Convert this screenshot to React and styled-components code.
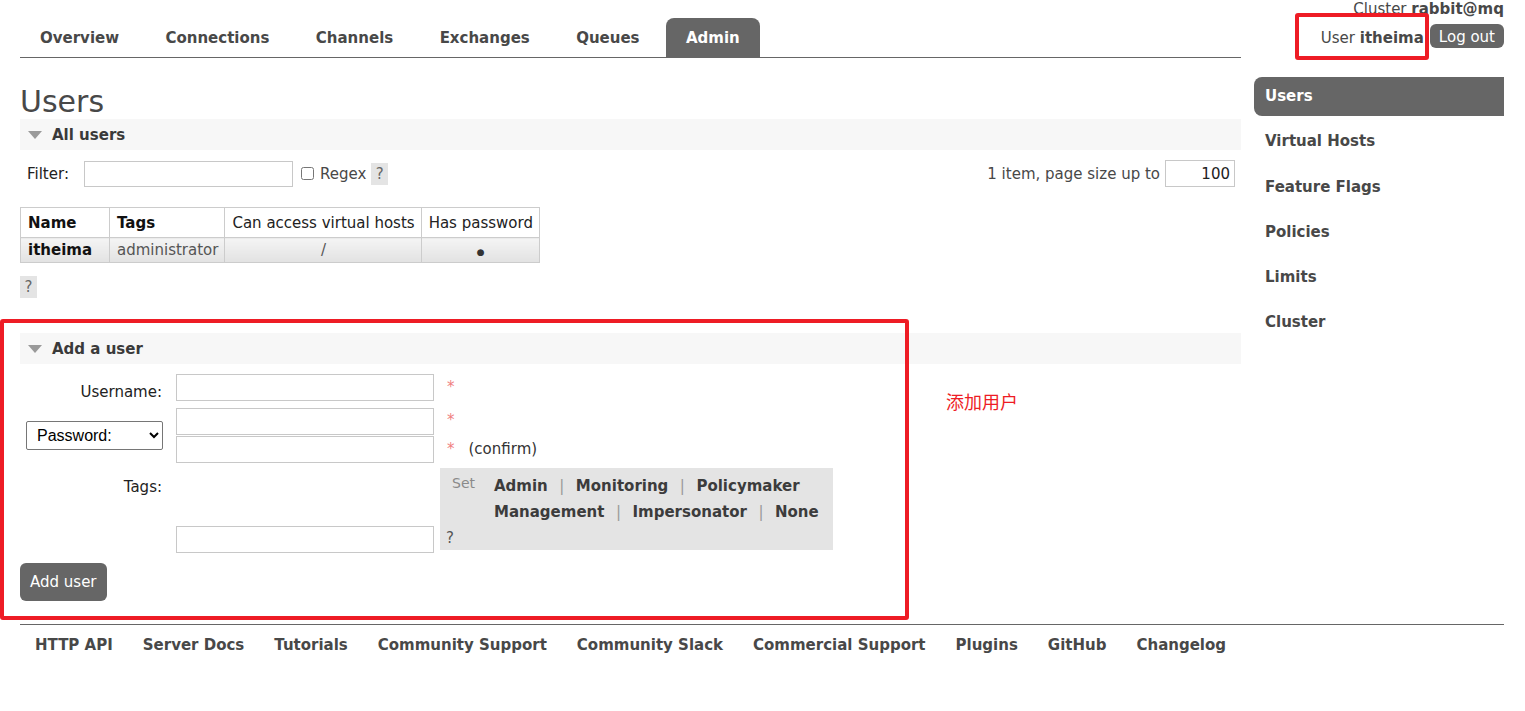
import React from "react";
import styled, { createGlobalStyle } from "styled-components";

const Global = createGlobalStyle`
  html, body { margin: 0; padding: 0; background: #fff; }
  body { font-family: "DejaVu Sans", Verdana, sans-serif; font-size: 15px; color: #484848; }
  * { box-sizing: border-box; }
`;

const Page = styled.div`
  position: relative;
  width: 1525px;
  min-height: 711px;
`;

const Header = styled.header`
  display: flex;
  padding: 0 21px 0 20px;
`;

const Nav = styled.nav`
  display: flex;
  gap: 6.4px;
  width: 1221px;
  padding-top: 18px;
  border-bottom: 1px solid #666;
`;

const Tab = styled.a`
  display: flex;
  align-items: center;
  height: 39px;
  padding: 0 20px;
  font-weight: bold;
  color: ${(p) => (p.$active ? "#fff" : "#484848")};
  background: ${(p) => (p.$active ? "#666" : "transparent")};
  border-radius: 8px 8px 0 0;
  text-decoration: none;
`;

const RightInfo = styled.div`
  margin-left: auto;
  display: flex;
  flex-direction: column;
  align-items: flex-end;
`;

const ClusterLine = styled.div`
  line-height: 18px;
  color: #484848;
  white-space: nowrap;
`;

const UserLine = styled.div`
  display: flex;
  align-items: center;
  gap: 6px;
  margin-top: 6px;
  white-space: nowrap;
`;

const UserText = styled.span`
  padding-top: 3px;
`;

const LogOut = styled.button`
  height: 24px;
  padding: 2px 9px 0;
  border: 0;
  border-radius: 6px;
  background: #666;
  color: #fff;
  font: 15px "DejaVu Sans", Verdana, sans-serif;
`;

const Body = styled.div`
  display: flex;
  gap: 13px;
  padding: 0 21px 0 20px;
`;

const Main = styled.main`
  flex: 0 0 1221px;
`;

const Title = styled.h1`
  margin: 25px 0 0;
  padding-top: 2px;
  font-size: 30px;
  line-height: 34px;
  font-weight: normal;
  color: #484848;
`;

const Sidebar = styled.aside`
  flex: 0 0 250px;
  margin-top: 19px;
  display: flex;
  flex-direction: column;
  gap: 6.3px;
`;

const SideItem = styled.a`
  display: block;
  height: 39px;
  line-height: 39px;
  padding-left: 11px;
  border-radius: 8px 0 0 8px;
  font-weight: bold;
  color: ${(p) => (p.$active ? "#fff" : "#484848")};
  background: ${(p) => (p.$active ? "#666" : "transparent")};
  text-decoration: none;
`;

const SectionHead = styled.div`
  display: flex;
  align-items: center;
  height: 31px;
  margin-top: ${(p) => p.$mt || 0}px;
  padding-left: 8px;
  background: #f7f7f7;
  font-weight: bold;
  color: #3a3a3a;
`;

const Triangle = styled.span`
  width: 0;
  height: 0;
  margin-right: 10px;
  border-left: 7px solid transparent;
  border-right: 7px solid transparent;
  border-top: 8px solid #9a9a9a;
`;

const FilterRow = styled.div`
  display: flex;
  align-items: center;
  height: 29px;
  margin-top: 9px;
`;

const FilterLabel = styled.label`
  padding-left: 7px;
  margin-right: 15px;
  color: #222;
`;

const TextInput = styled.input`
  width: ${(p) => p.$w || 258}px;
  height: ${(p) => p.$h || 27}px;
  border: 1px solid #c8c8c8;
  background: #fff;
  padding: 0 4px;
  font: 15px "DejaVu Sans", Verdana, sans-serif;
  color: #222;
  text-align: ${(p) => p.$align || "left"};
  outline: none;
`;

const Check = styled.input`
  width: 13px;
  height: 13px;
  margin: 0 6px 0 8px;
`;

const Help = styled.span`
  display: inline-block;
  width: 17px;
  height: 22px;
  line-height: 22px;
  text-align: center;
  background: #e4e4e4;
  color: #666;
  margin-left: ${(p) => p.$ml || 0}px;
`;

const Pager = styled.div`
  margin-left: auto;
  display: flex;
  align-items: center;
  gap: 5px;
  margin-right: 6px;
`;

const Table = styled.table`
  margin-top: 19px;
  border-collapse: collapse;
`;

const Th = styled.th`
  width: ${(p) => (p.$w ? `${p.$w}px` : "auto")};
  height: 30px;
  padding: 0 6px 0 7px;
  border: 1px solid #ccc;
  text-align: left;
  font-weight: ${(p) => (p.$bold ? "bold" : "normal")};
  color: ${(p) => (p.$bold ? "#111" : "#222")};
  white-space: nowrap;
`;

const Td = styled.td`
  height: 25px;
  padding: 0 6px 0 7px;
  border: 1px solid #ccc;
  background: linear-gradient(#f4f4f4, #e2e2e2);
  text-align: ${(p) => p.$align || "left"};
  font-weight: ${(p) => (p.$bold ? "bold" : "normal")};
  color: ${(p) => (p.$bold ? "#111" : "#555")};
`;

const Dot = styled.span`
  font-size: 9px;
  color: #333;
`;

const HelpLine = styled.div`
  margin-top: 13px;
`;

const FormRow = styled.div`
  display: flex;
  align-items: ${(p) => p.$align || "flex-start"};
  margin-top: ${(p) => p.$mt || 0}px;
`;

const LabelCell = styled.div`
  width: 156px;
  padding: ${(p) => p.$pt || 0}px 14px 0 6px;
  text-align: right;
  color: #222;
  flex: none;
`;

const Stack = styled.div`
  display: flex;
  flex-direction: column;
  gap: 1px;
`;

const Marks = styled.div`
  display: flex;
  flex-direction: column;
  padding-left: 13px;
`;

const Mark = styled.div`
  height: ${(p) => p.$h || 27}px;
  line-height: 20px;
  padding-top: ${(p) => p.$pt || 0}px;
  color: #f08080;
  white-space: nowrap;
`;

const Confirm = styled.span`
  margin-left: 14px;
  color: #333;
`;

const Select = styled.select`
  width: 137px;
  height: 29px;
  border: 1px solid #767676;
  border-radius: 2px;
  background: #fff;
  padding-left: 6px;
  font: 16px "Liberation Sans", Arial, sans-serif;
  color: #000;
`;

const TagBox = styled.div`
  width: 393px;
  height: 82px;
  margin-left: 6px;
  padding: 5px 10px 0 6px;
  background: #e4e4e4;
  display: grid;
  grid-template-columns: 48px 1fr;
  grid-template-rows: 52px 25px;
`;

const SetWord = styled.span`
  padding-left: 6px;
  line-height: 20px;
  font-size: 14px;
  color: #8a8a8a;
`;

const TagLinks = styled.div`
  line-height: 26px;
`;

const TagLink = styled.a`
  font-weight: bold;
  color: #3c3c3c;
  text-decoration: none;
  white-space: nowrap;
`;

const Sep = styled.span`
  padding: 0 11.5px;
  color: #999;
`;

const BoxHelp = styled.span`
  grid-column: 1 / 3;
  line-height: 26px;
  color: #555;
`;

const AddButton = styled.button`
  display: block;
  height: 38px;
  margin-top: 10px;
  padding: 0 10px;
  border: 0;
  border-radius: 6px;
  background: #666;
  color: #fff;
  font: 15px "DejaVu Sans", Verdana, sans-serif;
`;

const Footer = styled.footer`
  display: flex;
  margin: 23px 21px 0 20px;
  padding-top: 10px;
  border-top: 1px solid #666;
`;

const FootLink = styled.a`
  padding: 0 15px;
  line-height: 20px;
  font-weight: bold;
  color: #484848;
  text-decoration: none;
`;

const RedBox = styled.div`
  position: absolute;
  border: 4px solid #ee1c25;
  border-radius: 3px;
  pointer-events: none;
`;

const Note = styled.div`
  position: absolute;
  font: 18px "Noto Sans CJK SC", sans-serif;
  color: #ee1c25;
`;

const tabs = ["Overview", "Connections", "Channels", "Exchanges", "Queues", "Admin"];
const side = ["Users", "Virtual Hosts", "Feature Flags", "Policies", "Limits", "Cluster"];
const foot = ["HTTP API", "Server Docs", "Tutorials", "Community Support", "Community Slack", "Commercial Support", "Plugins", "GitHub", "Changelog"];

function Tags() {
  const row1 = ["Admin", "Monitoring", "Policymaker"];
  const row2 = ["Management", "Impersonator", "None"];
  const render = (list) =>
    list.map((t, i) => (
      <React.Fragment key={t}>
        {i > 0 && <Sep>|</Sep>}
        <TagLink href="#">{t}</TagLink>
      </React.Fragment>
    ));
  return (
    <TagBox>
      <SetWord>Set</SetWord>
      <TagLinks>
        <div>{render(row1)}</div>
        <div>{render(row2)}</div>
      </TagLinks>
      <BoxHelp>?</BoxHelp>
    </TagBox>
  );
}

export default function App() {
  return (
    <Page>
      <Global />
      <Header>
        <Nav>
          {tabs.map((t) => (
            <Tab key={t} href="#" $active={t === "Admin"}>{t}</Tab>
          ))}
        </Nav>
        <RightInfo>
          <ClusterLine>Cluster <b>rabbit@mq</b></ClusterLine>
          <UserLine>
            <UserText>User <b>itheima</b></UserText>
            <LogOut>Log out</LogOut>
          </UserLine>
        </RightInfo>
      </Header>
      <Body>
        <Main>
          <Title>Users</Title>
          <SectionHead><Triangle />All users</SectionHead>
          <FilterRow>
            <FilterLabel>Filter:</FilterLabel>
            <TextInput $w={209} $h={26} />
            <Check type="checkbox" />
            <span>Regex</span>
            <Help $ml={5}>?</Help>
            <Pager>
              <span>1 item, page size up to</span>
              <TextInput $w={70} $h={27} $align="right" defaultValue="100" />
            </Pager>
          </FilterRow>
          <Table>
            <thead>
              <tr>
                <Th $bold $w={89}>Name</Th>
                <Th $bold $w={114}>Tags</Th>
                <Th>Can access virtual hosts</Th>
                <Th>Has password</Th>
              </tr>
            </thead>
            <tbody>
              <tr>
                <Td $bold>itheima</Td>
                <Td>administrator</Td>
                <Td $align="center">/</Td>
                <Td $align="center"><Dot>●</Dot></Td>
              </tr>
            </tbody>
          </Table>
          <HelpLine><Help>?</Help></HelpLine>

          <SectionHead $mt={35}><Triangle />Add a user</SectionHead>
          <FormRow $mt={10}>
            <LabelCell $pt={9}>Username:</LabelCell>
            <TextInput />
            <Marks><Mark $pt={3}>*</Mark></Marks>
          </FormRow>
          <FormRow $mt={7} $align="center">
            <LabelCell>
              <Select defaultValue="p"><option value="p">Password:</option><option value="h">Password hash:</option></Select>
            </LabelCell>
            <Stack>
              <TextInput type="password" />
              <TextInput type="password" />
            </Stack>
            <Marks>
              <Mark $h={28} $pt={1}>*</Mark>
              <Mark $h={26} $pt={2}>*<Confirm>(confirm)</Confirm></Mark>
            </Marks>
          </FormRow>
          <FormRow $mt={5}>
            <LabelCell $pt={10}>Tags:</LabelCell>
            <TextInput style={{ marginTop: 58 }} />
            <Tags />
          </FormRow>
          <AddButton>Add user</AddButton>
        </Main>
        <Sidebar>
          {side.map((s) => (
            <SideItem key={s} href="#" $active={s === "Users"}>{s}</SideItem>
          ))}
        </Sidebar>
      </Body>
      <Footer>
        {foot.map((f) => (
          <FootLink key={f} href="#">{f}</FootLink>
        ))}
      </Footer>
      <RedBox style={{ left: 1295, top: 13, width: 134, height: 47 }} />
      <RedBox style={{ left: 0, top: 319, width: 909, height: 301 }} />
      <Note style={{ left: 946, top: 388 }}>添加用户</Note>
    </Page>
  );
}
